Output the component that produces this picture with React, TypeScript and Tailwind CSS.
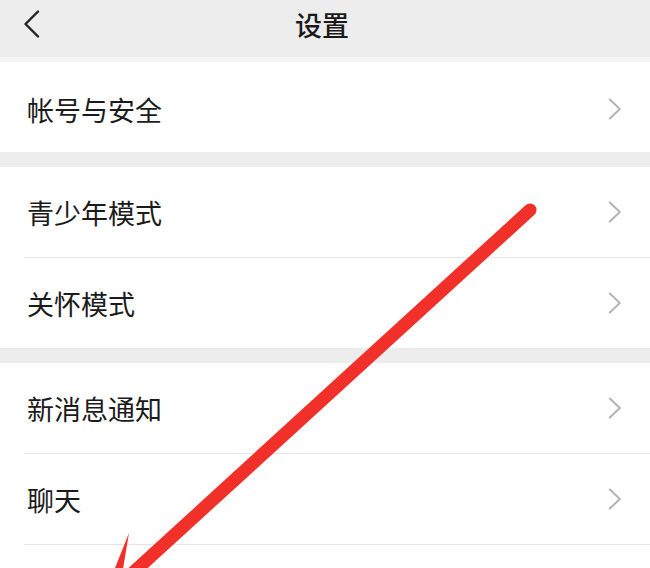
import React from "react";

function Chevron() {
  return (
    <svg width="14" height="22" viewBox="0 0 14 22" fill="none">
      <path d="M1.8 1.5 L11.8 11 L1.8 20.5" stroke="#b4b4b4" strokeWidth="2" strokeLinecap="round" strokeLinejoin="round" />
    </svg>
  );
}

function Row({ label, first, extraTop }: { label: string; first?: boolean; extraTop?: boolean }) {
  return (
    <div>
      {!first && <div className="ml-[24px] h-px bg-[#e6e6e6]" />}
      <div className={`flex h-[90px] items-center justify-between pl-[27px] pr-[28px] ${extraTop ? "pt-[4px]" : ""}`}>
        <span className="text-[27px] leading-none text-[#1b1b1b]">{label}</span>
        <Chevron />
      </div>
    </div>
  );
}

export default function App() {
  return (
    <div className="relative h-[568px] w-[650px] overflow-hidden bg-[#ededed] font-['Noto_Sans_CJK_SC','Noto_Sans',sans-serif]">
      <div className="grid h-[57px] grid-cols-[1fr_auto_1fr] items-start pt-[10px]">
        <svg className="ml-[23px]" width="17" height="28" viewBox="0 0 17 28" fill="none">
          <path d="M15 1.5 L2.5 14 L15 26.5" stroke="#222222" strokeWidth="2.4" strokeLinecap="round" strokeLinejoin="round" />
        </svg>
        <span className="-ml-[6px] text-[27px] font-medium leading-[30px] text-[#1a1a1a]">设置</span>
        <div />
      </div>
      <div className="h-[5px] bg-[#f4f4f4]" />

      <div className="bg-white">
        <Row label="帐号与安全" first extraTop />
      </div>
      <div className="h-[15px]" />

      <div className="bg-white">
        <Row label="青少年模式" first />
        <Row label="关怀模式" />
      </div>
      <div className="h-[15px]" />

      <div className="bg-white">
        <Row label="新消息通知" first />
        <Row label="聊天" />
        <div className="ml-[24px] h-px bg-[#e6e6e6]" />
        <div className="h-[90px]" />
      </div>

      <svg className="pointer-events-none absolute inset-0" width="650" height="568" viewBox="0 0 650 568">
        <line x1="530" y1="210" x2="125" y2="580" stroke="#f2302a" strokeWidth="13" strokeLinecap="round" />
        <polygon points="129,533 101,603 173,581 131,584 122,575" fill="#f2302a" />
      </svg>
    </div>
  );
}
